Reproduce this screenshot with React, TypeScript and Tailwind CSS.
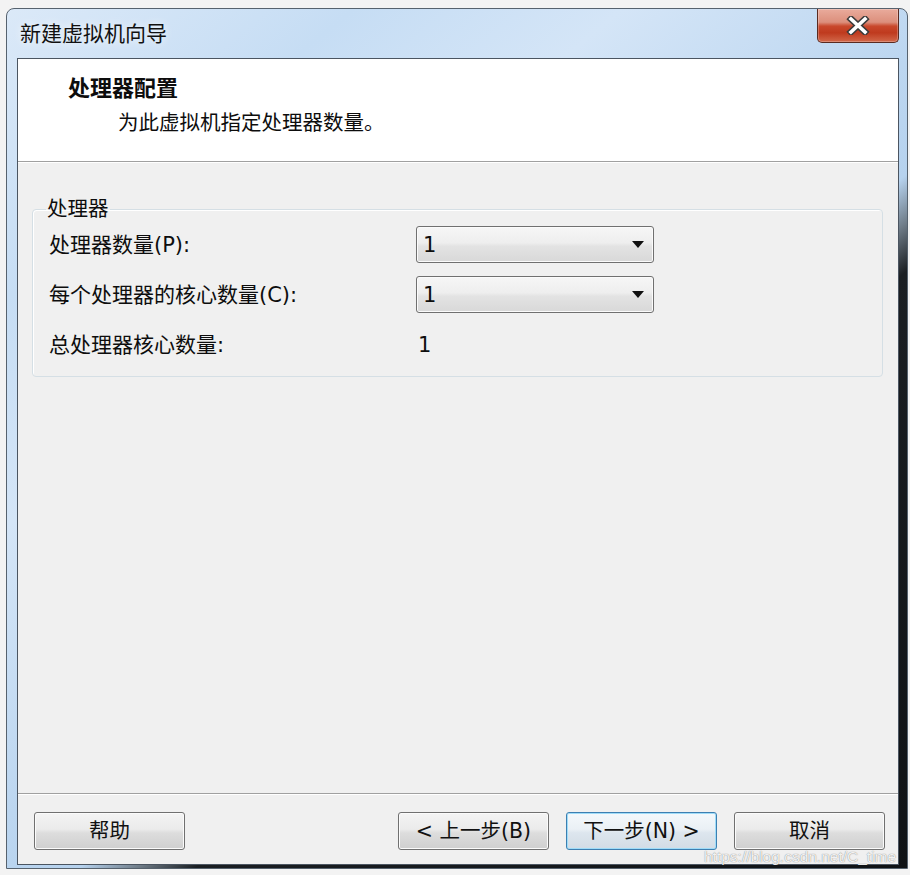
import React from "react";

function ComboArrow() {
  return (
    <svg width="12" height="7" viewBox="0 0 12 7" className="shrink-0">
      <path d="M0 0 H12 L6 7 Z" fill="#111" />
    </svg>
  );
}

function Combo({ value }: { value: string }) {
  return (
    <div className="h-[37px] w-[238px] flex items-center justify-between pl-[6px] pr-[9px] rounded-[3px] border border-[#707070] bg-[linear-gradient(to_bottom,#f6f6f6_0%,#eeeeee_45%,#e3e3e3_55%,#d8d8d8_100%)] shadow-[inset_0_0_0_1px_#fbfbfb]">
      <span>{value}</span>
      <ComboArrow />
    </div>
  );
}

function WinButton({ label, focused }: { label: string; focused?: boolean }) {
  return (
    <button
      className={
        focused
          ? "h-[38px] w-[151px] rounded-[3px] border border-[#3c7fb1] bg-[linear-gradient(to_bottom,#f4f8fb_0%,#eaf0f5_45%,#dde6ee_55%,#d2dce5_100%)] shadow-[inset_0_0_0_1px_#9fdcf8] text-[#111]"
          : "h-[38px] w-[151px] rounded-[3px] border border-[#707070] bg-[linear-gradient(to_bottom,#f4f4f4_0%,#ebebeb_45%,#dddddd_55%,#cfcfcf_100%)] shadow-[inset_0_0_0_1px_#fbfbfb] text-[#111]"
      }
    >
      {label}
    </button>
  );
}

export default function App() {
  return (
    <div className="relative w-[910px] h-[875px] bg-[#f3f3f3] pt-[8px] pl-[6px] font-['DejaVu_Sans','Noto_Sans_CJK_SC',sans-serif] text-[20.5px] leading-[24px] text-[#0d0d0d]">
      {/* window frame */}
      <div className="w-[902px] h-[861px] flex flex-col rounded-t-[8px] border border-[#56626e] bg-[linear-gradient(140deg,#dbe9f8_0%,#c6ddf4_18%,#d4e5f7_32%,#bcd6f0_50%,#b6d2ee_57%,#6f7c88_60%,#1a1e22_63%,#0f1215_100%)]">
        {/* title bar */}
        <div className="h-[49px] flex items-start justify-between">
          <span className="self-center pl-[13px] text-[21px] text-[#111] [text-shadow:0_0_8px_rgba(255,255,255,0.9)]">
            新建虚拟机向导
          </span>
          <button className="mr-[8px] w-[82px] h-[34px] flex items-center justify-center rounded-b-[5px] border border-t-0 border-[#5a2a20] bg-[linear-gradient(to_bottom,#e9ab9c_0%,#dc8f7c_40%,#c9482c_52%,#bf3a1e_72%,#d2684a_100%)] shadow-[inset_0_0_0_1px_rgba(255,255,255,0.25)]">
            <svg width="24" height="19" viewBox="0 0 24 19">
              <path d="M5 3 L19 16 M19 3 L5 16" stroke="#3b3b3b" strokeWidth="6.5" strokeLinecap="square" />
              <path d="M5 3 L19 16 M19 3 L5 16" stroke="#ffffff" strokeWidth="3.6" strokeLinecap="square" />
            </svg>
          </button>
        </div>

        {/* client area */}
        <div className="ml-[10px] mr-[8px] mb-[3px] flex-1 flex flex-col border border-[#4b5561] bg-[#f0f0f0]">
          {/* header */}
          <div className="h-[102px] bg-white pl-[50px] pt-[17px]">
            <div className="text-[22px] leading-[26px] font-bold">处理器配置</div>
            <div className="mt-[8px] pl-[50px] leading-[26px]">为此虚拟机指定处理器数量。</div>
          </div>
          <div className="h-px bg-[#a0a0a0]" />
          <div className="h-px bg-white" />

          {/* body */}
          <div className="flex-1 pt-[34px]">
            <fieldset className="ml-[14px] mr-[15px] rounded-[4px] border border-[#d5dfe5] shadow-[inset_1px_1px_0_#ffffff]">
              <legend className="ml-[13px] px-[1px]">处理器</legend>
              <div className="grid grid-cols-[367px_238px] gap-y-[13px] items-center pl-[16px] pt-[5px] pb-[13px] text-[21px]">
                <span>处理器数量(P):</span>
                <Combo value="1" />
                <span>每个处理器的核心数量(C):</span>
                <Combo value="1" />
                <span className="h-[37px] flex items-center">总处理器核心数量:</span>
                <span className="pl-[2px]">1</span>
              </div>
            </fieldset>
          </div>

          {/* footer */}
          <div className="h-px bg-[#a0a0a0]" />
          <div className="h-px bg-white" />
          <div className="h-[69px] flex items-start justify-between pt-[17px] pl-[16px] pr-[13px]">
            <WinButton label="帮助" />
            <div className="flex gap-[17px]">
              <WinButton label="< 上一步(B)" />
              <WinButton label="下一步(N) >" focused />
              <WinButton label="取消" />
            </div>
          </div>
        </div>
      </div>

      {/* watermark */}
      <span className="absolute left-[704px] top-[848px] font-['Liberation_Sans',sans-serif] text-[15.5px] leading-[17px] text-white/90 [text-shadow:0_0_1px_rgba(0,0,0,0.6)]">
        https://blog.csdn.net/C_time
      </span>
    </div>
  );
}
